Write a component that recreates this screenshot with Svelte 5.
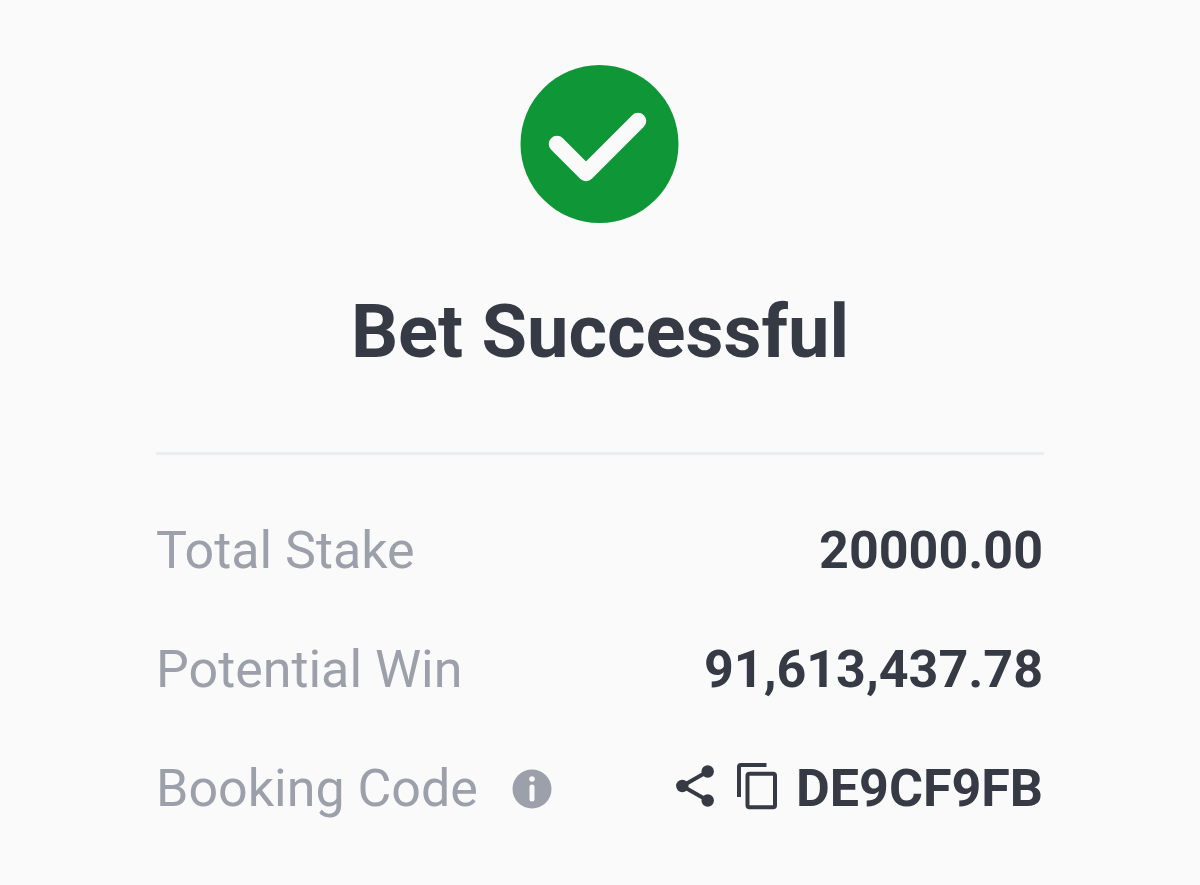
<script>
  const rows = [
    { label: 'Total Stake', value: '20000.00' },
    { label: 'Potential Win', value: '91,613,437.78' },
  ]
  const code = 'DE9CF9FB'
</script>

<main class="receipt">
  <svg class="check" viewBox="0 0 160 160" aria-hidden="true">
    <circle cx="79.5" cy="80" r="79" fill="#0f9737" />
    <path d="M37 80 L66 109 L118 57" fill="none" stroke="#fafafa" stroke-width="16.5" stroke-linecap="round" stroke-linejoin="round" />
  </svg>
  <h1>Bet Successful</h1>

  <dl class="details">
    {#each rows as row}
      <div class="row">
        <dt>{row.label}</dt>
        <dd>{row.value}</dd>
      </div>
    {/each}
    <div class="row">
      <dt>
        Booking Code
        <button class="info" aria-label="About booking code">
          <svg viewBox="0 0 40 40" width="40" height="40">
            <circle cx="20" cy="20" r="19.5" fill="#9ca0ab" />
            <circle cx="20" cy="10" r="2.8" fill="#fafafa" />
            <path d="M20 18 V30" stroke="#fafafa" stroke-width="5" stroke-linecap="round" />
          </svg>
        </button>
      </dt>
      <dd>
        <button class="share" aria-label="Share">
          <svg viewBox="0 0 38 50" width="38" height="50">
            <path d="M31.7 7.5 L6.3 22 L31.7 36.5" fill="none" stroke="#353a45" stroke-width="4" />
            <circle cx="31.7" cy="7.5" r="6.2" fill="#353a45" />
            <circle cx="6.3" cy="22" r="6.2" fill="#353a45" />
            <circle cx="31.7" cy="36.5" r="6.2" fill="#353a45" />
          </svg>
        </button>
        <button class="copy" aria-label="Copy">
          <svg viewBox="0 0 40 52" width="40" height="52">
            <path d="M2 34 V4 Q2 2 4 2 H29.5" fill="none" stroke="#353a45" stroke-width="4" />
            <rect x="10.5" y="10.7" width="27.5" height="33.6" rx="2" fill="none" stroke="#353a45" stroke-width="4" />
          </svg>
        </button>
        <span>{code}</span>
      </dd>
    </div>
  </dl>
</main>

<style>
  :global(body) {
    background: #fafafa;
  }
  .receipt {
    font-family: Roboto, sans-serif;
    padding: 64px 13% 37px;
    color: #353a45;
  }
  .check {
    display: block;
    width: 160px;
    height: 160px;
    margin: 0 auto;
  }
  h1 {
    margin: 64px 0 76px;
    font-size: 74px;
    line-height: 88px;
    font-weight: 700;
    text-align: center;
  }
  .details {
    margin: 0;
    padding-top: 36px;
    border-top: 3px solid #ecedf0;
  }
  .row {
    display: flex;
    align-items: center;
    justify-content: space-between;
    height: 119px;
    font-size: 52px;
  }
  dt, dd {
    display: flex;
    align-items: center;
    margin: 0;
  }
  dt {
    color: #9ca0ab;
  }
  dd {
    padding-right: 1px;
    font-weight: 700;
  }
  button {
    display: flex;
    padding: 0;
    border: 0;
    background: none;
    cursor: pointer;
  }
  .info {
    margin-left: 34px;
  }
  .share {
    margin-right: 23px;
  }
  .copy {
    margin-right: 19px;
  }
</style>
